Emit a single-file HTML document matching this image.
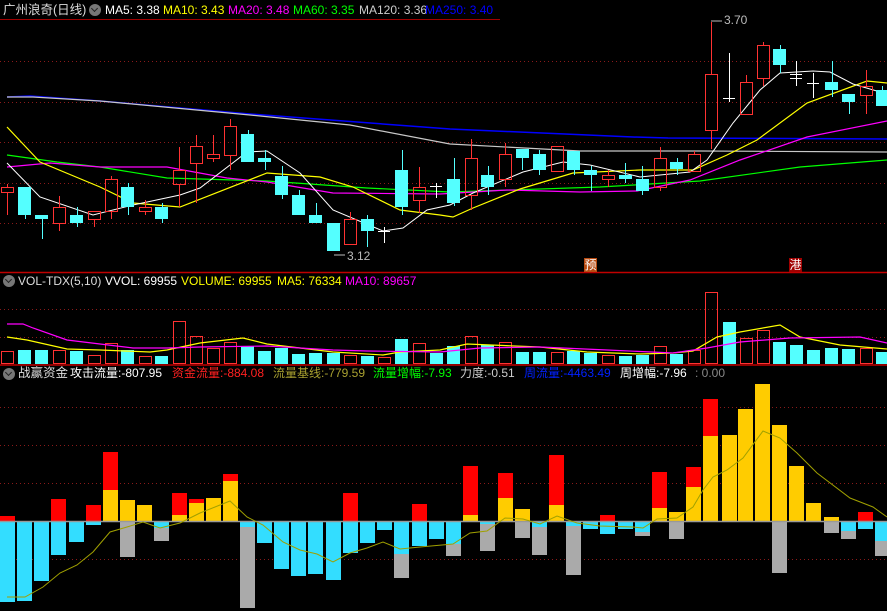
<!DOCTYPE html>
<html><head><meta charset="utf-8">
<style>
body{margin:0;background:#000;width:887px;height:611px;overflow:hidden;position:relative;font-family:"Liberation Sans","Noto Sans CJK SC",sans-serif;}
.t{position:absolute;font-size:12px;line-height:14px;white-space:nowrap;}
.ic{position:absolute;width:12px;height:12px;border-radius:50%;background:#777;}
.ic:after{content:"";position:absolute;left:3px;top:2px;width:4px;height:4px;border-right:1.5px solid #222;border-bottom:1.5px solid #222;transform:rotate(45deg);}
svg{position:absolute;left:0;top:0;}
</style></head><body>
<svg id="s" width="887" height="611" viewBox="0 0 887 611"></svg>

<div class="t" style="left:3px;top:3px;color:#ddd;font-size:12.5px">广州浪奇(日线)</div>
<div class="ic" style="left:89px;top:4px"></div>
<div class="t" style="left:105px;top:3px;color:#fff">MA5: 3.38</div>
<div class="t" style="left:163px;top:3px;color:#ffff00">MA10: 3.43</div>
<div class="t" style="left:228px;top:3px;color:#ff00ff">MA20: 3.48</div>
<div class="t" style="left:293px;top:3px;color:#00ff00">MA60: 3.35</div>
<div class="t" style="left:359px;top:3px;color:#ccc">MA120: 3.36</div>
<div class="t" style="left:425px;top:3px;color:#0000ff">MA250: 3.40</div>

<div class="t" style="left:724px;top:13px;color:#bbb">3.70</div>
<div class="t" style="left:347px;top:249px;color:#bbb">3.12</div>
<div class="t" style="left:584px;top:258px;width:13px;height:14px;background:#b84a10;color:#fff;font-size:12px;text-align:center">预</div>
<div class="t" style="left:789px;top:258px;width:13px;height:14px;background:#a00000;color:#fff;font-size:12px;text-align:center">港</div>

<div class="ic" style="left:3px;top:275px"></div>
<div class="t" style="left:18px;top:274px;color:#ddd">VOL-TDX(5,10)</div>
<div class="t" style="left:105px;top:274px;color:#fff">VVOL: 69955</div>
<div class="t" style="left:181px;top:274px;color:#ffff00">VOLUME: 69955</div>
<div class="t" style="left:277px;top:274px;color:#ffff00">MA5: 76334</div>
<div class="t" style="left:345px;top:274px;color:#ff00ff">MA10: 89657</div>

<div class="ic" style="left:3px;top:368px"></div>
<div class="t" style="left:18px;top:366px;color:#ddd;font-size:12.5px">战赢资金</div>
<div class="t" style="left:70px;top:366px;color:#fff">攻击流量:-807.95</div>
<div class="t" style="left:172px;top:366px;color:#ff2020">资金流量:-884.08</div>
<div class="t" style="left:273px;top:366px;color:#a8a030">流量基线:-779.59</div>
<div class="t" style="left:373px;top:366px;color:#00ff00">流量增幅:-7.93</div>
<div class="t" style="left:460px;top:366px;color:#ccc">力度:-0.51</div>
<div class="t" style="left:524px;top:366px;color:#0020ff">周流量:-4463.49</div>
<div class="t" style="left:620px;top:366px;color:#fff">周增幅:-7.96</div>
<div class="t" style="left:695px;top:366px;color:#888">: 0.00</div>

<script>
var s=document.getElementById('s'),h='';
function L(x1,y1,x2,y2,c,w,d){h+='<line x1="'+x1+'" y1="'+y1+'" x2="'+x2+'" y2="'+y2+'" stroke="'+c+'" stroke-width="'+(w||1)+'"'+(d?' stroke-dasharray="'+d+'"':'')+'/>';}
function R(x,y,w,hh,f,st){if(hh<=0)return;h+='<rect x="'+x+'" y="'+y+'" width="'+w+'" height="'+hh+'" '+(st?'fill="none" stroke="'+f+'"':'fill="'+f+'"')+'/>';}
function P(pts,c,w){h+='<polyline fill="none" stroke="'+c+'" stroke-width="'+(w||1)+'" points="'+pts.map(function(p){return p.join(',')}).join(' ')+'"/>';}
[61,102,142,183,223,309,337,407,445,483,559].forEach(function(y){L(0,y+.5,887,y+.5,'#8a1a1a',1,'1 3');});
L(0,19.5,500,19.5,'#a00000');
L(0,272.5,887,272.5,'#c00000',1.5);L(0,365,887,365,'#c00000',1.5);
P([[7,97],[30,96],[100,101],[250,114],[450,129],[633,137],[668,138],[887,139]],'#0000ff',1.5);
P([[7,97],[33,97],[100,101],[250,115],[350,125],[450,144],[580,151],[700,151],[887,152]],'#c8c8c8',1.2);
P([[7,155],[57,162],[100,167],[167,178],[267,181],[367,188],[450,192],[600,187],[700,181],[800,167],[887,160]],'#00ff00',1.2);
P([[7,167],[50,163],[100,167],[167,167],[227,178],[267,182],[333,193],[440,194],[507,190],[580,192],[637,191],[690,180],[740,160],[807,137],[887,121]],'#ff00ff',1.2);
P([[7,127],[40,162],[100,187],[133,203],[180,207],[267,173],[320,177],[353,187],[400,210],[440,215],[453,217],[473,208],[520,189],[573,173],[640,170],[693,170],[727,155],[757,140],[807,103],[867,81],[887,83]],'#ffff00',1.2);
P([[7,163],[40,197],[93,215],[133,205],[180,195],[200,188],[247,152],[267,151],[300,173],[333,210],[383,231],[403,228],[427,210],[450,205],[473,193],[523,172],[563,162],[590,165],[640,177],[690,172],[707,160],[733,123],[760,90],[780,73],[813,71],[830,72],[853,84],[887,94]],'#ffffff',1);
var C=[[7,'r',187,192,184,215],[24.5,'c',187,215,187,219],[41.5,'c',215,219,215,239],[58.5,'r',207,223,196,231],[76.5,'c',215,223,207,227],[93.5,'r',211,219,211,227],[110.5,'r',179,211,176,219],[127.5,'c',187,207,183,215],[144.5,'r',207,211,200,215],[161.5,'c',207,219,203,223],[179,'r',170,184,147,207],[196,'r',146,163,135,203],[213,'r',154,158,135,162],[230,'r',126,155,119,170],[247.5,'c',134,162,130,162],[264.5,'c',158,162,150,170],[281.5,'c',176,195,166,199],[298.5,'c',195,215,190,215],[315.5,'c',215,223,203,223],[333,'c',223,251,223,251],[350,'r',219,244,212,244],[367,'c',219,231,215,247],[384,'w',231,231,227,243],[401.5,'c',170,207,150,215],[419,'r',187,200,167,213],[436,'w',186,186,183,198],[453.5,'c',179,203,158,206],[470.5,'r',158,195,139,210],[487.5,'c',175,187,166,195],[505,'r',154,179,143,187],[522,'c',149,158,149,170],[539,'c',154,170,150,175],[556.5,'r',146,171,146,171],[573.5,'c',151,170,151,175],[590.5,'c',170,175,166,191],[607.5,'r',175,179,170,187],[625,'c',175,179,163,183],[642,'c',179,191,166,195],[659.5,'r',158,187,147,191],[676.5,'c',162,169,158,175],[693.5,'r',154,171,151,171],[710.5,'r',74,130,22,149],[729,'w',98,98,53,102],[745.5,'r',82,114,75,114],[762.5,'r',45,78,42,86],[779.5,'c',49,65,45,73],[796,'w',74,78,61,86],[813,'w',83,83,73,98],[831.5,'c',82,90,61,97],[848.5,'c',94,102,94,114],[865.5,'r',86,95,70,114],[882,'c',90,106,86,106]];
C.forEach(function(c){var x=c[0],cx=Math.round(x)+.5;
 if(c[1]=='r'){L(cx,c[4],cx,c[2],'#ff3232');L(cx,c[3],cx,c[5],'#ff3232');R(Math.round(x-6)+.5,c[2]+.5,12,c[3]-c[2],'#ff3232',1);}
 else if(c[1]=='c'){L(cx,c[4],cx,c[5],'#54ffff');R(Math.round(x-6.5),c[2],13,Math.max(c[3]-c[2],2),'#54ffff');}
 else {L(cx,c[4],cx,c[5],'#fff');L(Math.round(x-6),c[2]+.5,Math.round(x+6),c[2]+.5,'#fff');if(c[3]!=c[2])L(Math.round(x-6),c[3]+.5,Math.round(x+6),c[3]+.5,'#fff');}
});
L(711,21,722,21,'#bbb');L(334,255,345,255,'#bbb');
var VT=[351,350,350,350,351,355,343,350,356,356,321,336,348,342,346,351,348,354,353,353,355,356,357,339,343,353,346,336,345,342,352,352,352,351,353,355,356,355,346,354,350,292,322,338,330,342,345,350,348,349,348,352];
var VR='rccrcrrcrcrrrrccccccrcrcrccrcrccrccrccrcrrcrrcccccrc';
VT.forEach(function(t,i){var x=C[i][0];if(VR[i]=='r')R(Math.round(x-6)+.5,t+.5,12,363-t,'#ff3232',1);else R(Math.round(x-6.5),t,13,364-t,'#54ffff');});
P([[7,337],[27,340],[67,349],[100,350],[150,352],[167,350],[200,343],[243,338],[267,344],[300,348],[333,352],[383,355],[400,352],[440,350],[467,344],[540,347],[587,352],[640,354],[673,353],[693,351],[717,337],[740,332],[780,325],[800,337],[840,345],[887,349]],'#ffff00',1.2);
P([[7,324],[23,324],[33,328],[67,340],[100,344],[133,348],[167,348],[200,347],[267,346],[333,350],[367,351],[440,352],[480,348],[540,347],[607,350],[673,353],[707,348],[740,342],[790,338],[860,337],[887,343]],'#ff00ff',1.2);
var B=[[516,521,602,602],[521,521,601,601],[521,521,581,581],[499,521,555,555],[521,521,542,542],[505,521,525,525],[452,490,521,521],[500,500,521,557],[505,505,521,521],[521,521,528,541],[493,515,521,521],[499,503,521,521],[498,498,521,521],[474,481,521,521],[521,521,527,608],[521,521,543,543],[521,521,569,569],[521,521,576,576],[521,521,574,574],[521,521,580,580],[493,521,553,553],[521,521,543,543],[521,521,530,530],[521,521,554,578],[504,521,546,546],[521,521,539,539],[521,521,544,556],[466,515,521,521],[521,521,524,551],[473,498,521,521],[509,509,521,538],[521,521,527,555],[455,505,521,521],[521,521,526,575],[521,521,529,529],[515,521,534,534],[521,521,529,529],[521,521,532,536],[472,508,521,521],[512,512,521,539],[467,487,521,521],[399,436,521,521],[435,435,521,521],[409,409,521,521],[384,384,521,521],[425,425,521,573],[466,466,521,521],[503,503,521,521],[517,517,521,533],[521,521,531,539],[512,521,529,529],[521,521,541,556]];
B.forEach(function(b,i){var x0=Math.max(0,Math.round(C[i][0]-7.5)),w=Math.min(15,887-x0);
 R(x0,b[0],w,b[1]-b[0],'#ff0000');R(x0,b[1],w,521-b[1],'#ffcc00');R(x0,521,w,b[2]-521,'#33ddff');R(x0,b[2],w,b[3]-b[2],'#aaaaaa');});
L(0,521.5,887,521.5,'#999',1.5);
P([[7,597],[25,597],[43,587],[60,573],[77,565],[93,552],[110,532],[127,527],[143,522],[160,528],[180,523],[200,513],[230,501],[247,517],[263,525],[283,542],[300,550],[317,554],[333,562],[350,553],[367,548],[383,542],[400,549],[420,547],[453,544],[470,533],[487,531],[505,518],[523,519],[540,524],[557,516],[577,523],[600,526],[633,527],[643,528],[657,519],[677,518],[693,507],[703,490],[713,477],[727,470],[743,458],[763,431],[780,438],[797,453],[817,473],[850,498],[873,507],[887,517]],'#a0a000',1);
s.innerHTML=h;
</script>
</body></html>
